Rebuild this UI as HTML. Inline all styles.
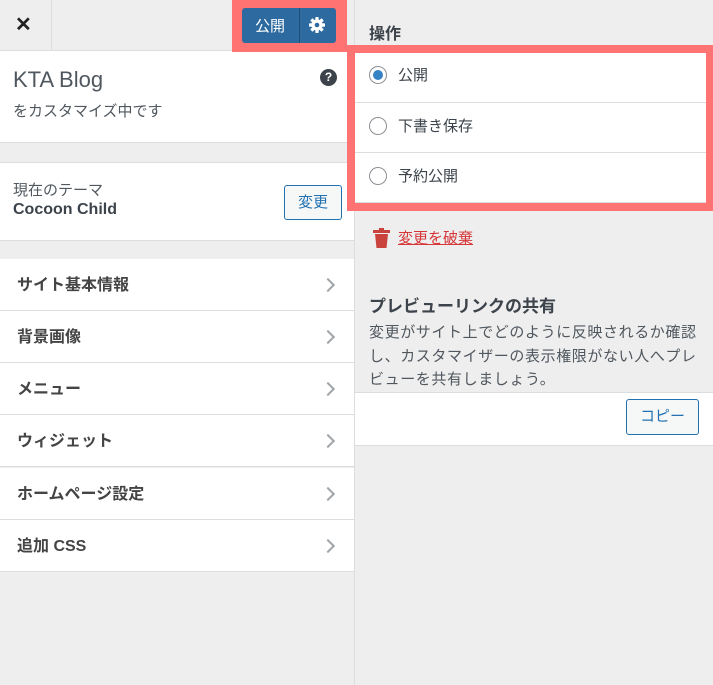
<!DOCTYPE html>
<html><head><meta charset="utf-8"><style>
*{box-sizing:border-box;margin:0;padding:0}
body{width:713px;height:685px;background:#eee;font-family:"Liberation Sans","Noto Sans CJK JP",sans-serif;color:#3c434a;position:relative;overflow:hidden;font-size:14px}
.a{position:absolute}
.left{left:0;top:0;width:355px;height:685px;background:#eee;border-right:1px solid #ddd}
.item{left:0;width:354px;height:52px;background:#fff;border-bottom:1px solid #ddd;font-weight:bold;font-size:16px;padding:2px 0 0 17px;line-height:50px;color:#444}
.chev{position:absolute;right:21px;top:21px;width:10px;height:10px;border-right:2px solid #a0a5aa;border-top:2px solid #a0a5aa;transform:rotate(45deg)}
.radio{width:18px;height:18px;border:1px solid #8c8f94;border-radius:50%;background:#fff}
.rt{left:398px;font-size:15px;color:#3c434a}
.row{left:355px;width:351px;height:50px;background:#fff;border-bottom:1px solid #ddd}
</style></head><body>
<div class="a left"></div>
<div class="a" style="left:0;top:0;width:354px;height:51px;background:#eee;border-bottom:1px solid #ddd"></div>
<div class="a" style="left:51px;top:0;width:1px;height:50px;background:#ddd"></div>
<div class="a" style="left:15px;top:12px;font-size:20px;font-weight:bold;color:#222">✕</div>
<div class="a" style="left:0;top:51px;width:354px;height:92px;background:#fff;border-bottom:1px solid #ddd"></div>
<div class="a" style="left:13px;top:67px;font-size:22px;color:#50575e;font-weight:300">KTA Blog</div>
<div class="a" style="left:13px;top:100px;font-size:15px;color:#50575e">をカスタマイズ中です</div>
<div class="a" style="left:320px;top:69px;width:17px;height:17px;border-radius:50%;background:#3c434a;color:#fff;font-size:12px;font-weight:bold;text-align:center;line-height:17px">?</div>
<div class="a" style="left:0;top:162px;width:354px;height:79px;background:#fff;border-top:1px solid #ddd;border-bottom:1px solid #ddd"></div>
<div class="a" style="left:13px;top:179px;font-size:15px;color:#50575e">現在のテーマ</div>
<div class="a" style="left:13px;top:201px;font-size:16px;font-weight:bold;color:#3c434a">Cocoon Child</div>
<div class="a" style="left:284px;top:185px;width:58px;height:35px;border:1px solid #2271b1;border-radius:3px;background:#f6f7f7;color:#2271b1;text-align:center;line-height:33px;font-size:15px">変更</div>
<div class="a item" style="top:259px">サイト基本情報<span class="chev"></span></div>
<div class="a item" style="top:311px">背景画像<span class="chev"></span></div>
<div class="a item" style="top:363px">メニュー<span class="chev"></span></div>
<div class="a item" style="top:415px">ウィジェット<span class="chev"></span></div>
<div class="a item" style="top:468px">ホームページ設定<span class="chev"></span></div>
<div class="a item" style="top:520px">追加 CSS<span class="chev"></span></div>

<div class="a" style="left:232px;top:0;width:115px;height:52px;background:#ff7373"></div>
<div class="a" style="left:242px;top:8px;width:94px;height:35px;background:#2c6aa0;border-radius:3px"></div>
<div class="a" style="left:299px;top:8px;width:1px;height:35px;background:#1d4f7c"></div>
<div class="a" style="left:255px;top:15px;color:#fff;font-size:15px">公開</div>
<svg class="a" style="left:309px;top:17px" width="16" height="16" viewBox="0 0 16 16"><g fill="#fff"><circle cx="8" cy="8" r="5.5"/><rect x="6.3" y="0" width="3.4" height="16" rx="0.8"/><rect x="6.3" y="0" width="3.4" height="16" rx="0.8" transform="rotate(45 8 8)"/><rect x="6.3" y="0" width="3.4" height="16" rx="0.8" transform="rotate(90 8 8)"/><rect x="6.3" y="0" width="3.4" height="16" rx="0.8" transform="rotate(135 8 8)"/></g><circle cx="8" cy="8" r="2.3" fill="#2c6aa0"/></svg>

<div class="a" style="left:369px;top:20px;font-size:16px;font-weight:bold;color:#3c434a">操作</div>
<div class="a" style="left:347px;top:45px;width:366px;height:166px;background:#ff7373"></div>
<div class="a" style="left:355px;top:53px;width:351px;height:150px;background:#fff"></div>
<div class="a row" style="top:53px"></div>
<div class="a row" style="top:103px"></div>
<div class="a row" style="top:153px"></div>
<div class="a radio" style="left:369px;top:66px"><div style="margin:3px;width:10px;height:10px;border-radius:50%;background:#3582c4"></div></div>
<div class="a rt" style="top:64px">公開</div>
<div class="a radio" style="left:369px;top:117px"></div>
<div class="a rt" style="top:115px">下書き保存</div>
<div class="a radio" style="left:369px;top:167px"></div>
<div class="a rt" style="top:165px">予約公開</div>
<svg class="a" style="left:373px;top:228px" width="17" height="20" viewBox="0 0 17 20"><rect x="6" y="0" width="5" height="3" fill="#c9423b"/><rect x="0" y="2" width="17" height="3" fill="#c9423b"/><path d="M2 6h13l-1.5 14h-10z" fill="#c9423b"/></svg>
<div class="a" style="left:398px;top:227px;color:#d63638;font-size:15px;text-decoration:underline">変更を破棄</div>
<div class="a" style="left:369px;top:292px;font-size:17px;font-weight:bold;color:#3c434a">プレビューリンクの共有</div>
<div class="a" style="left:369px;top:321px;width:336px;font-size:15px;letter-spacing:0.6px;line-height:23.5px;color:#50575e">変更がサイト上でどのように反映されるか確認し、カスタマイザーの表示権限がない人へプレビューを共有しましょう。</div>
<div class="a" style="left:355px;top:392px;width:358px;height:54px;background:#fff;border-top:1px solid #ddd;border-bottom:1px solid #ddd"></div>
<div class="a" style="left:626px;top:399px;width:73px;height:36px;border:1px solid #2271b1;border-radius:3px;background:#f6f7f7;color:#2271b1;text-align:center;line-height:34px;font-size:15px">コピー</div>
</body></html>
